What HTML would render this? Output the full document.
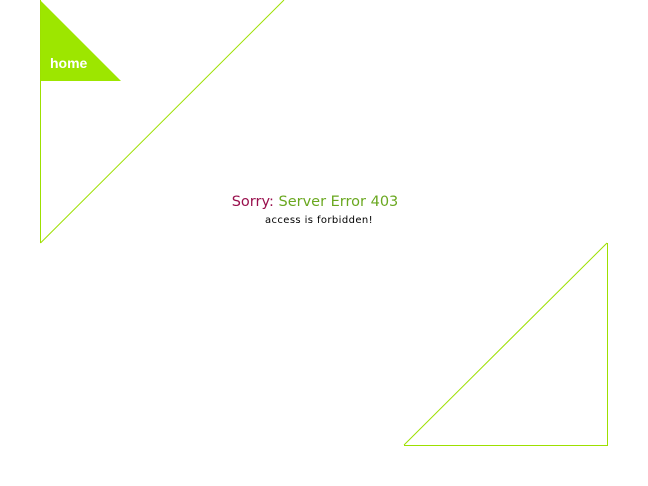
<!DOCTYPE html>
<html><head><meta charset="utf-8"><style>
html,body{margin:0;padding:0;background:#fff;width:648px;height:486px;overflow:hidden;position:relative;font-family:"DejaVu Sans","Liberation Sans",sans-serif}
svg{position:absolute;left:0;top:0}
.home{position:absolute;left:50px;top:55px;color:#fff;font-weight:bold;font-size:14px;font-family:"Liberation Sans",sans-serif}
.t1{position:absolute;left:0;width:630px;text-align:center;top:194px;font-size:14.5px;color:#6aa820;white-space:nowrap}
.t1 span{color:#99104d}
.t2{position:absolute;left:0;width:638px;text-align:center;top:215px;font-size:10px;color:#000;letter-spacing:0.4px}
</style></head><body>
<svg width="648" height="486">
<polygon points="40,0 121,81 40,81" fill="#9de600"/>
<line x1="40.5" y1="0" x2="40.5" y2="243" stroke="#9de000" stroke-width="1"/>
<line x1="40.5" y1="243" x2="284" y2="0" stroke="#9de000" stroke-width="1"/>
<line x1="404" y1="445" x2="607" y2="243" stroke="#9de000" stroke-width="1"/>
<line x1="607.5" y1="243" x2="607.5" y2="445.5" stroke="#9de000" stroke-width="1"/>
<line x1="404" y1="445.5" x2="608" y2="445.5" stroke="#9de000" stroke-width="1"/>
</svg>
<div class="home">home</div>
<div class="t1"><span>Sorry:</span> Server Error 403</div>
<div class="t2">access is forbidden!</div>
</body></html>
